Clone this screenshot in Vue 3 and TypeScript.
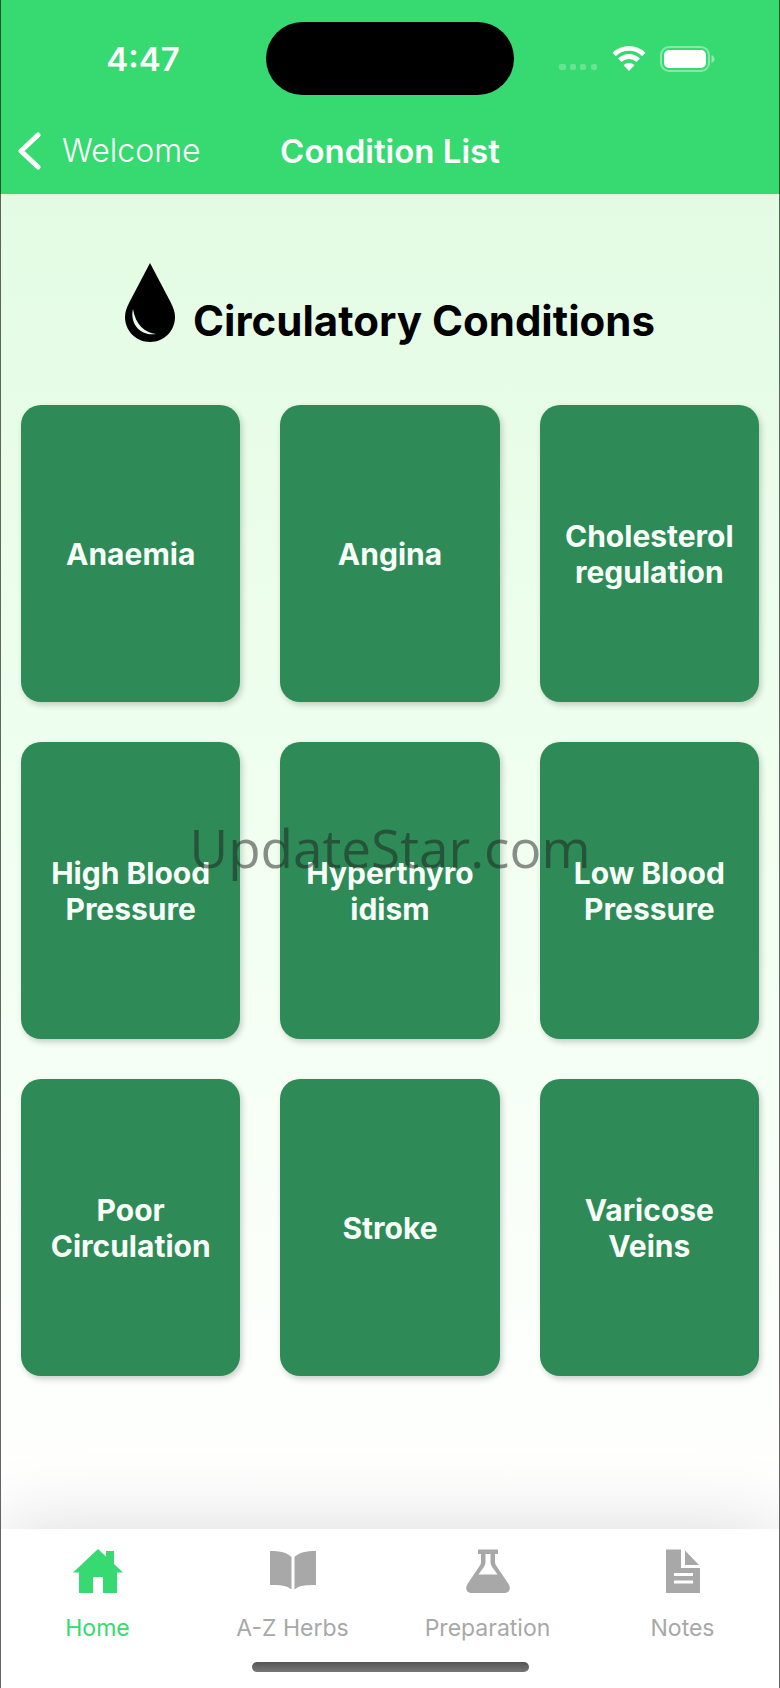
<script setup lang="ts">
interface Tab {
  id: string
  label: string
}

const conditions: string[] = [
  'Anaemia',
  'Angina',
  'Cholesterol regulation',
  'High Blood Pressure',
  'Hyperthyroidism',
  'Low Blood Pressure',
  'Poor Circulation',
  'Stroke',
  'Varicose Veins',
]

const tabs: Tab[] = [
  { id: 'home', label: 'Home' },
  { id: 'herbs', label: 'A-Z Herbs' },
  { id: 'preparation', label: 'Preparation' },
  { id: 'notes', label: 'Notes' },
]

const activeTab = 'home'
</script>

<template>
  <div class="screen">
    <header class="header">
      <div class="status">
        <span class="time">4:47</span>
        <span class="island"></span>
        <div class="indicators">
          <svg class="dots" width="39" height="26" viewBox="0 0 39 26" aria-hidden="true">
            <rect x="0" y="18" width="7" height="6" rx="2" />
            <rect x="11" y="18" width="6" height="6" rx="2" />
            <rect x="21" y="18" width="6" height="6" rx="2" />
            <rect x="32" y="18" width="6" height="6" rx="2" />
          </svg>
          <svg width="34" height="26" viewBox="0 0 34 26" fill="none" aria-hidden="true">
            <path d="M2.2 8.4 C10.6 0.4 23.4 0.4 31.8 8.4" stroke="#fff" stroke-width="4.8" />
            <path d="M7.8 14.3 C13 9.2 21 9.2 26.2 14.3" stroke="#fff" stroke-width="4.8" />
            <path d="M11.6 19.3 C14.6 16.3 19.4 16.3 22.4 19.3 L17 25 Z" fill="#fff" />
          </svg>
          <svg width="55" height="26" viewBox="0 0 55 26" fill="none" aria-hidden="true">
            <rect x="1" y="1" width="48" height="24" rx="8" stroke="#fff" stroke-opacity=".4" stroke-width="2" />
            <rect x="4" y="4" width="42" height="18" rx="5" fill="#fff" />
            <path d="M51.5 9 C55.5 10.5 55.5 15.5 51.5 17 Z" fill="#fff" fill-opacity=".45" />
          </svg>
        </div>
      </div>
      <div class="navbar">
        <button class="back" type="button">
          <svg width="24" height="40" viewBox="0 0 24 40" fill="none" aria-hidden="true">
            <path d="M20 4 L3 20 L20 36" stroke="#fff" stroke-width="5" stroke-linecap="round" stroke-linejoin="round" />
          </svg>
          <span>Welcome</span>
        </button>
        <h1 class="title">Condition List</h1>
      </div>
    </header>

    <main class="content">
      <h2 class="heading">
        <svg width="50" height="79" viewBox="0 0 50 79" aria-hidden="true">
          <path d="M25 0 L45.5 39 C48.5 45 50 49 50 54 C50 68 39 79 25 79 C11 79 0 68 0 54 C0 49 1.500 45 4.500 39 Z" />
          <path d="M8 46 C4.500 60 15 73.500 31 71 C20 69.500 10.500 62 8 46 Z" fill="#e9fce9" />
        </svg>
        <span>Circulatory Conditions</span>
      </h2>
      <div class="grid">
        <button v-for="name in conditions" :key="name" class="card" type="button">{{ name }}</button>
      </div>
      <span class="watermark">UpdateStar.com</span>
    </main>

    <footer class="footer">
      <nav class="tabs">
        <a
          v-for="tab in tabs"
          :key="tab.id"
          href="#"
          class="tab"
          :class="{ active: tab.id === activeTab }"
        >
          <svg v-if="tab.id === 'home'" width="50" height="44" viewBox="0 0 50 44" aria-hidden="true">
            <path d="M25 0 L33 7.500 V2 H41 V15 L50 23.500 H44 V44 H30 V28 H20 V44 H6 V23.500 H0 Z" />
          </svg>
          <svg v-else-if="tab.id === 'herbs'" width="48" height="44" viewBox="0 0 48 44" aria-hidden="true">
            <path d="M1 2 C11 2 18 3.500 22.500 8 V40.500 C18 36.500 11 36 1 36 Z" />
            <path d="M47 2 C37 2 30 3.500 25.500 8 V40.500 C30 36.500 37 36 47 36 Z" />
          </svg>
          <svg v-else-if="tab.id === 'preparation'" width="44" height="44" viewBox="0 0 44 44" aria-hidden="true">
            <path
              fill-rule="evenodd"
              d="M12 0.500 H32 V5 H29 V13 C29 14.500 29.500 15.500 30.500 17 L42.500 35 C45.500 39.500 43 44 38 44 H6 C1 44 -1.500 39.500 1.500 35 L13.500 17 C14.500 15.500 15 14.500 15 13 V5 H12 Z M19.500 5 V13 C19.500 15 18.500 17 17.500 18.500 L12.500 25.500 H31.500 L26.500 18.500 C25.500 17 24.500 15 24.500 13 V5 Z"
            />
          </svg>
          <svg v-else width="34" height="44" viewBox="0 0 34 44" aria-hidden="true">
            <path
              fill-rule="evenodd"
              d="M0 0.500 H15 V19 H34 V44 H0 Z M8 24 V27 H27 V24 Z M8 31.500 V34.500 H27 V31.500 Z"
            />
            <path d="M19 1.500 L33 16 H19 Z" />
          </svg>
          <span>{{ tab.label }}</span>
        </a>
      </nav>
      <div class="home-indicator"></div>
    </footer>
  </div>
</template>

<style>
body {
  margin: 0;
}
</style>

<style scoped>
.screen {
  position: relative;
  display: flex;
  flex-direction: column;
  min-height: 100vh;
  overflow: hidden;
  font-family: Inter, 'Liberation Sans', sans-serif;
  background: #fff;
}

.screen::after {
  content: '';
  position: absolute;
  inset: 0;
  border: solid rgba(0, 0, 0, 0.6);
  border-width: 0 1px;
  pointer-events: none;
}

.header {
  color: #fff;
  background: #36da70;
}

.status {
  display: grid;
  grid-template-columns: 1fr 248px 1fr;
  align-items: center;
  height: 117px;
}

.time {
  padding-left: 20px;
  text-align: center;
  font-size: 33px;
  font-weight: 600;
}

.island {
  height: 73px;
  border-radius: 37px;
  background: #000;
}

.indicators {
  display: flex;
  justify-content: flex-end;
  gap: 14px;
  padding-right: 65px;
}

.dots {
  fill: rgba(255, 255, 255, 0.25);
}

.navbar {
  display: grid;
  grid-template-columns: 1fr auto 1fr;
  align-items: center;
  height: 67px;
  padding-bottom: 10px;
}

.back {
  display: flex;
  align-items: center;
  gap: 20px;
  justify-self: start;
  padding: 0 0 0 18px;
  border: 0;
  background: none;
  color: inherit;
  font: inherit;
  font-size: 32px;
  font-weight: 350;
}

.title {
  margin: 0;
  font-size: 33px;
  line-height: 38px;
  font-weight: 600;
}

.content {
  position: relative;
  flex: 1;
  padding: 69px 21px 40px;
  background: linear-gradient(#e3fbe3, #f0fff0 45%, #fdfffc 90%, #fff);
}

.heading {
  display: flex;
  justify-content: center;
  align-items: flex-end;
  gap: 18px;
  margin: 0 0 63px;
  font-size: 42px;
  line-height: 43px;
  font-weight: 650;
  color: #000;
}

.grid {
  display: grid;
  grid-template-columns: repeat(3, 1fr);
  grid-auto-rows: 297px;
  gap: 40px;
}

.card {
  padding: 0 25px;
  border: 0;
  border-radius: 20px;
  background: #2e8b57;
  box-shadow: 2px 3px 6px rgba(0, 0, 0, 0.2);
  color: #f8fff8;
  font: inherit;
  font-size: 30px;
  line-height: 36px;
  font-weight: 650;
  overflow-wrap: anywhere;
}

.watermark {
  position: absolute;
  top: 616px;
  left: 0;
  right: 0;
  text-align: center;
  font-family: 'Open Sans', 'Noto Sans', sans-serif;
  font-size: 53px;
  line-height: 76px;
  color: rgba(30, 30, 30, 0.5);
  pointer-events: none;
}

.footer {
  position: relative;
  padding: 20px 0 16px;
  background: #fff;
  box-shadow: 0 0 80px rgba(0, 0, 0, 0.15);
}

.tabs {
  display: grid;
  grid-template-columns: repeat(4, 1fr);
}

.tab {
  display: flex;
  flex-direction: column;
  align-items: center;
  gap: 21px;
  color: #a8a8a8;
  fill: currentColor;
  font-size: 23px;
  line-height: 28px;
  text-decoration: none;
}

.tab.active {
  color: #36da70;
}

.home-indicator {
  width: 277px;
  height: 10px;
  margin: 20px auto 0;
  border-radius: 5px;
  background: linear-gradient(#555, #777);
}
</style>
